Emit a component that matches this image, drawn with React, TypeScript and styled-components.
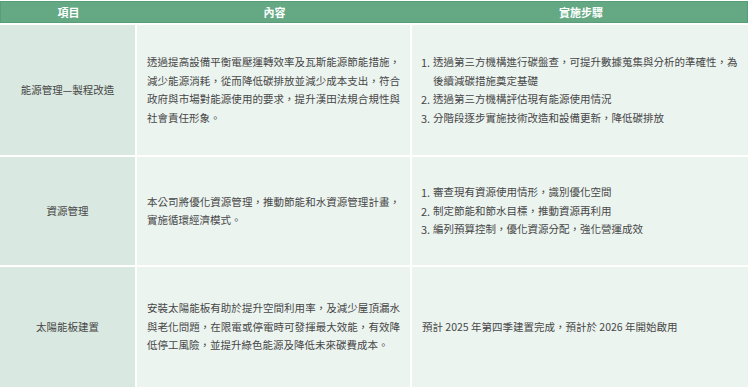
import React from "react";
import styled, { createGlobalStyle } from "styled-components";

const GlobalStyle = createGlobalStyle`
  html, body {
    margin: 0;
    padding: 0;
    background: #ffffff;
  }
  body {
    font-family: "Noto Sans CJK TC", "Noto Sans", sans-serif;
  }
`;

const COLS = "135px 273px 336px";

const Table = styled.div`
  width: 748px;
  padding-top: 1px;
  display: flex;
  flex-direction: column;
  gap: 2px;
`;

const HeaderRow = styled.div`
  display: grid;
  grid-template-columns: ${COLS};
  column-gap: 2px;
  height: 22px;
  box-sizing: border-box;
  background: #64a984;
  border: 1px solid #559e76;
  align-items: center;
`;

const HeaderCell = styled.div`
  color: #ffffff;
  font-weight: 700;
  font-size: 11px;
  line-height: 20px;
  text-align: center;
`;

const BodyRow = styled.div<{ $h: number }>`
  display: grid;
  grid-template-columns: ${COLS};
  column-gap: 2px;
  height: ${(p) => p.$h}px;
`;

const Cell = styled.div<{ $variant: "label" | "text" | "steps" }>`
  display: flex;
  flex-direction: column;
  justify-content: center;
  box-sizing: border-box;
  color: #474747;
  font-size: 10.5px;
  line-height: 18.5px;
  background: ${(p) => (p.$variant === "label" ? "#d9e8e0" : "#ecf4f0")};
  padding: ${(p) =>
    p.$variant === "label"
      ? "0 4px"
      : p.$variant === "text"
      ? "0 10px"
      : "0 6px 0 9px"};
  text-align: ${(p) => (p.$variant === "label" ? "center" : "left")};
`;

const Para = styled.p`
  margin: 0;
  text-align: justify;
`;

const PlainStep = styled.p`
  margin: 0;
  padding-left: 1px;
`;

const StepList = styled.ol`
  margin: 0;
  padding: 0;
  list-style: none;
`;

const StepItem = styled.li`
  display: flex;
`;

const StepNum = styled.span`
  flex: 0 0 12px;
  font-size: 11px;
`;

const StepText = styled.span`
  flex: 1;
`;

type Row = {
  label: string;
  content: string;
  steps: string[] | string;
  h: number;
};

const rows: Row[] = [
  {
    label: "能源管理—製程改造",
    content:
      "透過提高設備平衡電壓運轉效率及瓦斯能源節能措施，減少能源消耗，從而降低碳排放並減少成本支出，符合政府與市場對能源使用的要求，提升漢田法規合規性與社會責任形象。",
    steps: [
      "透過第三方機構進行碳盤查，可提升數據蒐集與分析的準確性，為後續減碳措施奠定基礎",
      "透過第三方機構評估現有能源使用情況",
      "分階段逐步實施技術改造和設備更新，降低碳排放",
    ],
    h: 130,
  },
  {
    label: "資源管理",
    content: "本公司將優化資源管理，推動節能和水資源管理計畫，實施循環經濟模式。",
    steps: [
      "審查現有資源使用情形，識別優化空間",
      "制定節能和節水目標，推動資源再利用",
      "編列預算控制，優化資源分配，強化營運成效",
    ],
    h: 108,
  },
  {
    label: "太陽能板建置",
    content:
      "安裝太陽能板有助於提升空間利用率，及減少屋頂漏水與老化問題，在限電或停電時可發揮最大效能，有效降低停工風險，並提升綠色能源及降低未來碳費成本。",
    steps: "預計 2025 年第四季建置完成，預計於 2026 年開始啟用",
    h: 120,
  },
];

export default function App() {
  return (
    <>
      <GlobalStyle />
      <Table>
        <HeaderRow>
          <HeaderCell>項目</HeaderCell>
          <HeaderCell>內容</HeaderCell>
          <HeaderCell>實施步驟</HeaderCell>
        </HeaderRow>
        {rows.map((r) => (
          <BodyRow key={r.label} $h={r.h}>
            <Cell $variant="label">{r.label}</Cell>
            <Cell $variant="text">
              <Para>{r.content}</Para>
            </Cell>
            <Cell $variant="steps">
              {Array.isArray(r.steps) ? (
                <StepList>
                  {r.steps.map((s, i) => (
                    <StepItem key={i}>
                      <StepNum>{i + 1}.</StepNum>
                      <StepText>{s}</StepText>
                    </StepItem>
                  ))}
                </StepList>
              ) : (
                <PlainStep>{r.steps}</PlainStep>
              )}
            </Cell>
          </BodyRow>
        ))}
      </Table>
    </>
  );
}
